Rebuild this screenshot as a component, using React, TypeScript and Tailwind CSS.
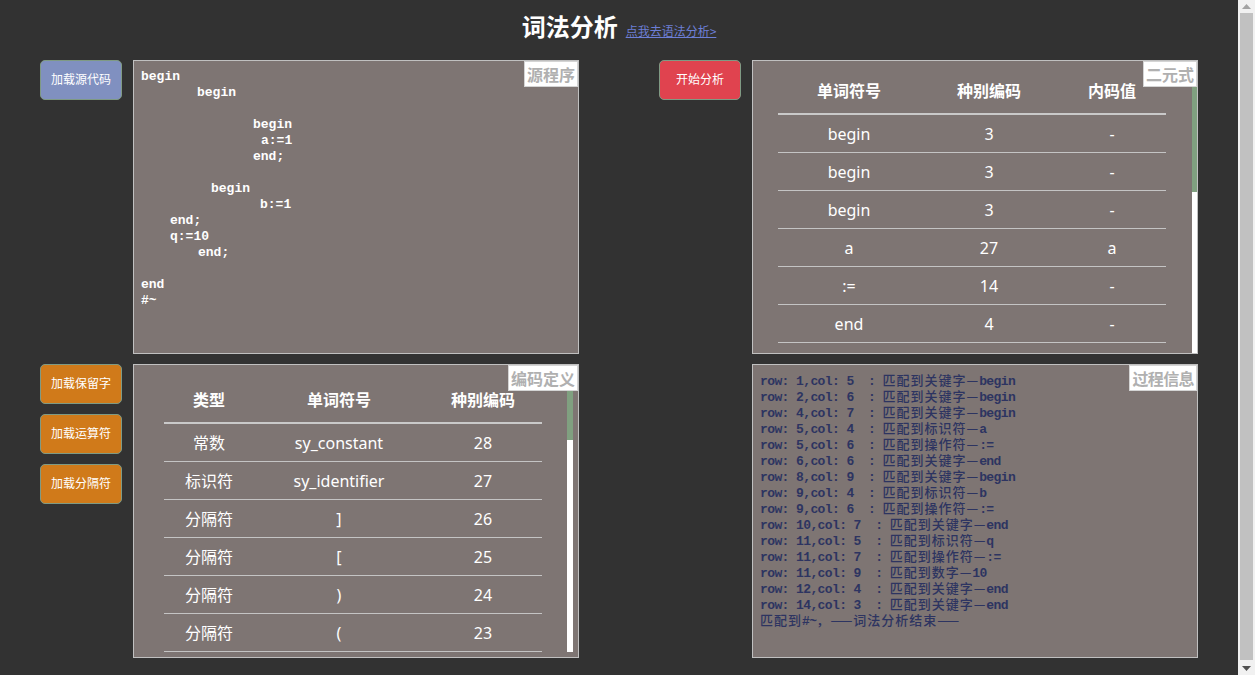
import React from "react";

const codeLines: [number, string][] = [
    [0, "begin"],
    [56, "begin"],
    [0, ""],
    [112, "begin"],
    [120, "a:=1"],
    [112, "end;"],
    [0, ""],
    [70, "begin"],
    [119, "b:=1"],
    [29, "end;"],
    [29, "q:=10"],
    [57, "end;"],
    [0, ""],
    [0, "end"],
    [0, "#~"],
];

const tokens = [
    ["begin", "3", "-"],
    ["begin", "3", "-"],
    ["begin", "3", "-"],
    ["a", "27", "a"],
    [":=", "14", "-"],
    ["end", "4", "-"],
];

const defs = [
    ["常数", "sy_constant", "28"],
    ["标识符", "sy_identifier", "27"],
    ["分隔符", "]", "26"],
    ["分隔符", "[", "25"],
    ["分隔符", ")", "24"],
    ["分隔符", "(", "23"],
];

const logs = [
    "row: 1,col: 5  : 匹配到关键字—begin",
    "row: 2,col: 6  : 匹配到关键字—begin",
    "row: 4,col: 7  : 匹配到关键字—begin",
    "row: 5,col: 4  : 匹配到标识符—a",
    "row: 5,col: 6  : 匹配到操作符—:=",
    "row: 6,col: 6  : 匹配到关键字—end",
    "row: 8,col: 9  : 匹配到关键字—begin",
    "row: 9,col: 4  : 匹配到标识符—b",
    "row: 9,col: 6  : 匹配到操作符—:=",
    "row: 10,col: 7  : 匹配到关键字—end",
    "row: 11,col: 5  : 匹配到标识符—q",
    "row: 11,col: 7  : 匹配到操作符—:=",
    "row: 11,col: 9  : 匹配到数字—10",
    "row: 12,col: 4  : 匹配到关键字—end",
    "row: 14,col: 3  : 匹配到关键字—end",
    "匹配到#~，——词法分析结束——",
];

const sans = "font-['Noto_Sans','Noto_Sans_CJK_SC',sans-serif]";

// split a log line so the CJK runs (and the long dashes) get the CJK font
function LogLine({ text }: { text: string }) {
    const parts = text.split(/([\u2014\u4e00-\u9fff\uff0c]+)/);
    return (
        <div className="h-[16px] whitespace-pre">
            {parts.map((p, i) =>
                /[\u2014\u4e00-\u9fff\uff0c]/.test(p) ? (
                    <span key={i} className="font-['Noto_Sans_CJK_SC',sans-serif] tracking-[1px] font-medium">{p}</span>
                ) : (
                    <span key={i}>{p}</span>
                )
            )}
        </div>
    );
}

function Label({ text }: { text: string }) {
    return (
        <div className="absolute top-0 right-0 h-[26px] px-[2px] bg-white border border-[#d4d4d4] text-[16px] leading-[24px] font-bold text-[#b0b0b0] font-['Noto_Sans_CJK_SC',sans-serif]">
            {text}
        </div>
    );
}

function Btn({ text, color }: { text: string; color: string }) {
    return (
        <button className={`w-[82px] h-[40px] rounded-[5px] border border-[#7f9a84] text-white text-[12px] ${sans} ${color}`}>
            {text}
        </button>
    );
}

function Table({ head, rows, widths }: { head: string[]; rows: string[][]; widths: string[] }) {
    return (
        <div className={`${sans} text-white text-[16px]`}>
            <div className="flex h-[46px] items-center border-b-2 border-[#c9c9c9] font-bold">
                {head.map((h, i) => (
                    <div key={i} className={`${widths[i]} text-center`}>{h}</div>
                ))}
            </div>
            {rows.map((r, j) => (
                <div key={j} className="flex h-[38px] items-center border-b border-[#c4c4c4]">
                    {r.map((c, i) => (
                        <div key={i} className={`${widths[i]} text-center`}>{c}</div>
                    ))}
                </div>
            ))}
        </div>
    );
}

export default function App() {
    return (
        <div className="h-screen flex bg-[#323232] overflow-hidden">
            <div className="flex-1">
                {/* Title */}
                <div className="h-[60px] pt-[10px] flex justify-center items-baseline gap-[8px]">
                    <h1 className="text-[24px] leading-[32px] font-bold text-white font-['Noto_Sans_CJK_SC',sans-serif]">词法分析</h1>
                    <a href="#" className="text-[12px] text-[#6d7fd6] underline font-['Noto_Sans_CJK_SC',sans-serif]">点我去语法分析&gt;</a>
                </div>

                <div className="grid grid-cols-2 gap-y-[10px]">
                    {/* Source */}
                    <div className="flex gap-[11px] pl-[40px]">
                        <Btn text="加载源代码" color="bg-[#8090c0]" />
                        <div className="relative w-[446px] h-[294px] border border-[#c0c0c0] bg-[#7e7573] pt-[8px] pl-[7px] font-['Liberation_Mono',monospace] font-bold text-[13px] leading-[16px] text-white">
                            {codeLines.map(([pad, t], i) => (
                                <div key={i} className="h-[16px] whitespace-pre" style={{ paddingLeft: pad }}>{t}</div>
                            ))}
                            <Label text="源程序" />
                        </div>
                    </div>

                    {/* Tokens */}
                    <div className="flex gap-[11px] pl-[40px]">
                        <Btn text="开始分析" color="bg-[#e0434f]" />
                        <div className="relative w-[446px] h-[294px] border border-[#c0c0c0] bg-[#7e7573] flex">
                            <div className="flex-1 overflow-hidden pl-[25px] pt-[8px]">
                                <div className="w-[388px]">
                                    <Table head={["单词符号", "种别编码", "内码值"]} rows={tokens} widths={["w-[142px]", "w-[138px]", "w-[108px]"]} />
                                </div>
                            </div>
                            <div className="w-[5px] bg-white flex flex-col">
                                <div className="h-[131px] bg-[#80a080]" />
                            </div>
                            <Label text="二元式" />
                        </div>
                    </div>

                    {/* Definitions */}
                    <div className="flex gap-[11px] pl-[40px]">
                        <div className="flex flex-col gap-[10px]">
                            <Btn text="加载保留字" color="bg-[#d07a1a]" />
                            <Btn text="加载运算符" color="bg-[#d07a1a]" />
                            <Btn text="加载分隔符" color="bg-[#d07a1a]" />
                        </div>
                        <div className="relative w-[446px] h-[294px] border border-[#c0c0c0] bg-[#7e7573] flex pr-[5px] pb-[5px]">
                            <div className="flex-1 overflow-hidden pl-[30px] pt-[13px]">
                                <div className="w-[378px]">
                                    <Table head={["类型", "单词符号", "种别编码"]} rows={defs} widths={["w-[90px]", "w-[170px]", "w-[118px]"]} />
                                </div>
                            </div>
                            <div className="w-[6px] bg-white flex flex-col">
                                <div className="h-[75px] bg-[#80a080]" />
                            </div>
                            <Label text="编码定义" />
                        </div>
                    </div>

                    {/* Process */}
                    <div className="flex gap-[11px] pl-[133px]">
                        <div className="relative w-[446px] h-[294px] border border-[#c0c0c0] bg-[#7e7573] pt-[7px] pl-[7px] font-['Liberation_Mono',monospace] font-bold text-[13px] leading-[16px] tracking-[-0.6px] text-[#2d3461]">
                            {logs.map((l, i) => (
                                <LogLine key={i} text={l} />
                            ))}
                            <Label text="过程信息" />
                        </div>
                    </div>
                </div>
            </div>

            {/* page scrollbar */}
            <div className="w-[17px] bg-[#f1f1f1] flex flex-col">
                <div className="h-[13px] flex items-center justify-center">
                    <svg width="9" height="5" viewBox="0 0 9 5"><path d="M4.5 0L9 5H0z" fill="#a3a3a3" /></svg>
                </div>
                <div className="flex-1 mx-[2px] mb-[2px] bg-[#c1c1c1]" />
                <div className="h-[13px] flex items-center justify-center">
                    <svg width="9" height="5" viewBox="0 0 9 5"><path d="M0 0H9L4.5 5z" fill="#505050" /></svg>
                </div>
            </div>
        </div>
    );
}
